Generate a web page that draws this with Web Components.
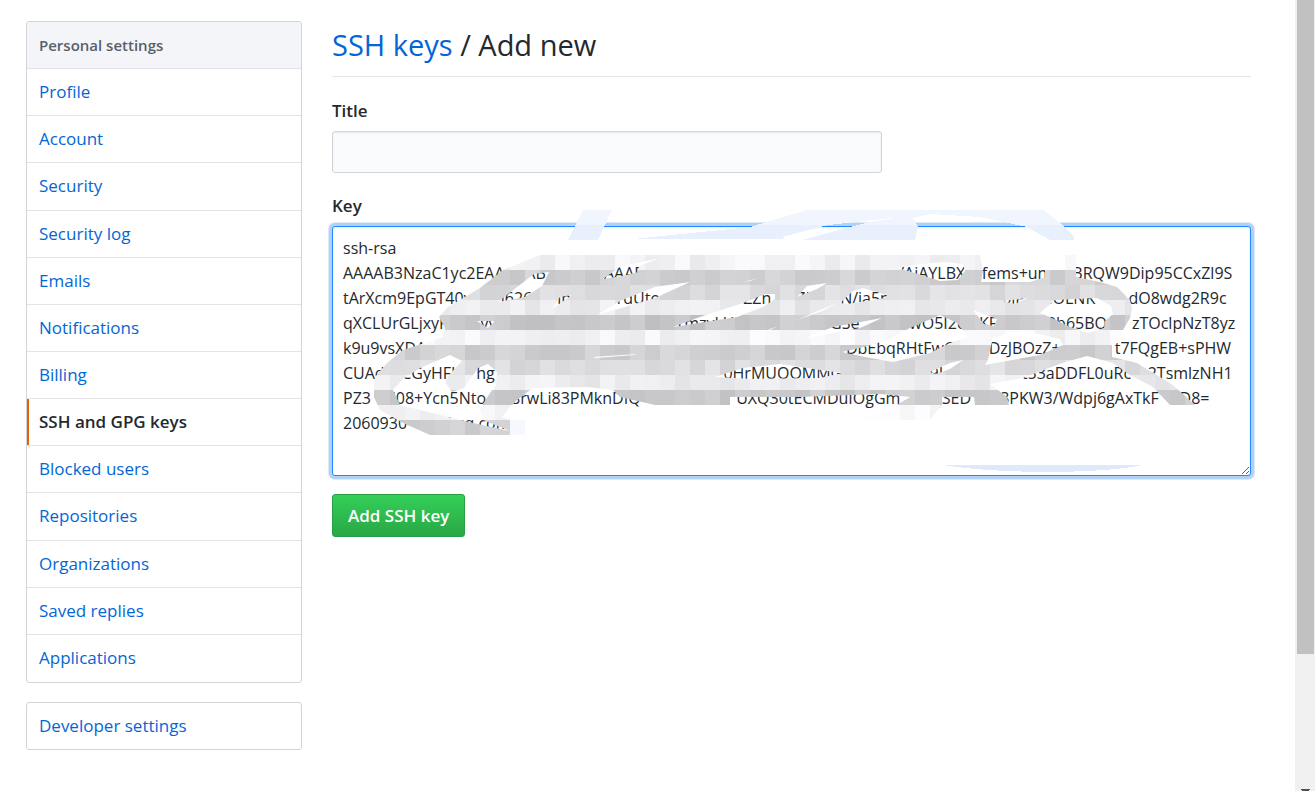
<!DOCTYPE html>
<html lang="en">
<head>
<meta charset="utf-8">
<title>Add new SSH key</title>
<style>
html,body{margin:0;min-height:100%}
body{background:#fff;color:#24292e;font:17px/25px "Open Sans","Noto Sans",sans-serif}
</style>
</head>
<body>
<settings-page>
  <settings-menu slot="side" heading="Personal settings">
    <menu-item>Profile</menu-item>
    <menu-item>Account</menu-item>
    <menu-item>Security</menu-item>
    <menu-item>Security log</menu-item>
    <menu-item>Emails</menu-item>
    <menu-item>Notifications</menu-item>
    <menu-item>Billing</menu-item>
    <menu-item current>SSH and GPG keys</menu-item>
    <menu-item>Blocked users</menu-item>
    <menu-item>Repositories</menu-item>
    <menu-item>Organizations</menu-item>
    <menu-item>Saved replies</menu-item>
    <menu-item>Applications</menu-item>
  </settings-menu>
  <settings-menu slot="side"><menu-item>Developer settings</menu-item></settings-menu>
  <key-form></key-form>
</settings-page>
<script>
class Base extends HTMLElement{
  constructor(){super();this.attachShadow({mode:'open'}).innerHTML=this.render();}
}
customElements.define('settings-page',class extends Base{
  render(){return `<style>
  :host{display:grid;grid-template-columns:minmax(0,1fr) 20px;min-height:100vh}
  .content{display:flex;gap:30px;align-items:flex-start;padding:21px 44px 21px 26px}
  aside{flex:0 0 276px;display:grid;gap:19px}
  main{flex:1;min-width:0}
  </style>
  <div class="content"><aside><slot name="side"></slot></aside><main><slot></slot></main></div>
  <page-scrollbar></page-scrollbar>`}
});
customElements.define('page-scrollbar',class extends Base{
  render(){return `<style>
  :host{display:flex;flex-direction:column;justify-content:space-between;height:100vh;overflow:hidden;background:#f0f0f0}
  div{height:654px;max-height:84%;margin:0 1px 0 2px;background:#c1c1c1}
  svg{display:block;align-self:center;width:9px;height:2px}
  </style><div></div><svg viewBox="0 0 9 2"><path d="M0 0h9v1H8v1H1V1H0z" fill="#505050"/></svg>`}
});
customElements.define('settings-menu',class extends HTMLElement{
  connectedCallback(){
    if(this.shadowRoot)return;
    const h=this.getAttribute('heading');
    this.attachShadow({mode:'open'}).innerHTML=`<style>
    :host{display:block}
    nav{display:grid;grid-auto-rows:1fr;border:1px solid #d1d5da;border-radius:3px;overflow:hidden;min-height:46px}
    nav.long{min-height:660px}
    h3{margin:0;padding:10px 12px;background:#f3f5f9;color:#586069;font-size:15px;line-height:26px;font-weight:600;border-bottom:1px solid #e1e4e8}
    </style><nav class="${h?'long':''}">${h?`<h3>${h}</h3>`:''}<slot></slot></nav>`;
  }
});
customElements.define('menu-item',class extends Base{
  render(){return `<style>
  :host{display:flex;border-bottom:1px solid #e1e4e8}
  :host(:last-child){border-bottom:0}
  a{flex:1;padding:10px 12px;line-height:26px;color:#0366d6;text-decoration:none}
  :host([current]) a{padding-left:10px;border-left:2px solid #e36209;color:#24292e;font-weight:600}
  </style><a href="#"><slot></slot></a>`}
});
customElements.define('key-form',class extends Base{
  render(){return `<style>
  :host{display:block}
  h2{margin:0 0 21px;padding-bottom:8px;border-bottom:1px solid #e1e4e8;font-size:29px;line-height:47px;font-weight:400}
  h2 a{color:#0366d6;text-decoration:none}
  label{display:block;font-weight:600;line-height:25px;margin-bottom:8px}
  input,textarea,button{box-sizing:border-box;font:inherit;color:inherit;display:block;margin:0}
  input{width:550px;max-width:100%;height:42px;padding:6px 10px;border:1px solid #d1d5da;border-radius:3px;background:#fafbfc;box-shadow:inset 0 1px 2px rgba(27,31,35,.075);margin-bottom:20px}
  .key{position:relative;margin-bottom:18px}
  textarea{width:100%;height:250px;padding:9px 10px;border:1px solid #2188ff;border-radius:3px;outline:0;box-shadow:inset 0 1px 2px rgba(27,31,35,.075),0 0 0 3px #b1d1f7,0 0 0 4px #dce9f8;font-size:16px;white-space:pre;overflow:hidden;resize:vertical}
  redaction-marks{position:absolute;left:0;top:-16px;pointer-events:none}
  button{height:43px;padding:0 15px;border:1px solid #28a043;border-radius:3px;background:linear-gradient(#34d058,#28a745);color:#fff;font-weight:600}
  </style>
  <h2><a href="#">SSH keys</a> / Add new</h2>
  <form>
  <label for="title">Title</label><input id="title" type="text">
  <label for="key">Key</label>
  <div class="key"><textarea id="key" spellcheck="false">
ssh-rsa
AAAAB3NzaC1yc2EAA     AB              AAAB                                                             /AiAYLBX    fems+un      BRQW9Dip95CCxZl9S
tArXcm9EpGT40v       i626      in           rdUto                    ZZn      ZK      N/ia5n                           0jF      lOLNK        dO8wdg2R9c
qXCLUrGLjxyF        vy                                           TmzyLU                       GSe            wO5I2o   KF            9b65BO      zTOclpNzT8yz
k9u9vsXDA                                                                                                     DbEbqRHtFwG        DzJBOzZ+             t7FQgEB+sPHW
CUAd    CGyHFI     hg                                                       0HrMUQOMMG                     9L                  t53aDDFL0uRc    2TsmlzNH1
PZ3     l08+Ycn5Nto      8rwLi83PMknDIQ                       UXQ30tECMDuIOgGm         jSED       3PKW3/Wdpj6gAxTkF     D8=
2060930        @qq.com</textarea><redaction-marks></redaction-marks></div>
  <button type="button">Add SSH key</button>
  </form>`}
});
customElements.define('redaction-marks',class extends Base{
  render(){
    // Mosaic of 15px cells: one base grey for each row, varied from cell to cell.
    const rows=[242,208,220,234,200,244,208,220,236,202,243,208];
    let seed=7,cells='';
    rows.forEach((v,r)=>{
      for(let x=360;x<1200;x+=15){
        seed=(seed*1103515245+12345)%2147483648;
        const base=r===10&&x>600?252:v;
        const d=Math.floor(seed/65536)%19-9,g=Math.min(253,base+d);
        cells+=`<rect x="${x}" y="${255+r*15}" width="15" height="15" fill="rgb(${g},${g},${g+2})"/>`;
      }
    });
    const outer='M374 397L375 377 387 363 403 350 443 337 445 328 439 317 448 307 480 288 503 270 540 255H980L983 270 981 282H1030L1045 277V270H1065V255H1076V277L1100 282 1117 287 1130 300 1132 309 1130 318 1123 330 1112 343V357L1137 363 1173 385 1195 405H1170L1153 387 1130 375 1113 363 1087 356 1062 363 1023 378 990 384 1007 397 1009 405 H975L974 397 942 397 942 405 930 420 855 420 885 412 910 397 880 394 800 397H730V405H655L620 397 613 390 587 387 533 388 517 400 510 407 502 417 510 420H525V435H430L403 423 380 410Z';
    const holes=[
     'M393 390L403 379 420 368 450 355 462 361 449 375 445 382 452 392 464 388 478 368 488 364 497 372 496 385 490 393 485 401 480 409 483 420 510 431 473 423 440 415 400 405Z',
     'M498 302L512 291 534 274 549 272 542 286 525 297Z',
     'M552 309L560 297 572 295Z',
     'M597 315L620 301 655 287 690 282 655 298 625 307Z',
     'M603 279L620 267 660 258 639 266 638 272 622 276Z',
     'M477 321L495 321 488 328Z','M593 357L637 354 634 355 596 358Z',
     'M673 327L700 317 743 303 765 294 775 294 775 299 763 307 737 317Z',
     'M797 297L807 286 827 283 817 289Z',
     'M840 303L853 291 863 288 887 295 885 298 847 304Z',
     'M744 282L758 278 750 281Z','M755 335L778 326 770 330Z',
     'M797 320L820 310 838 303 822 311Z',
     'M805 338L833 327 882 318 860 328Z',
     'M842 352L868 346 890 339 910 328 940 315 957 323 968 337 950 343 930 353 893 362 865 357Z',
     'M715 377L743 368 780 364 820 370 842 373 820 378 753 379Z',
     'M897 268L920 264 945 262 963 264 965 271 958 280 940 281 915 273Z',
     'M1003 301L1028 298 1015 304Z','M1040 313L1055 300 1097 298 1111 306 1113 314 1105 321 1104 328 1088 333 1070 327 1052 318Z',
     'M973 310L997 319 994 326 984 324Z',
     'M988 360L990 350 993 338 1022 330 1060 339 1063 345 1040 355 985 365Z',
     'M930 372L950 363 963 360 950 369 936 374Z'
    ];
    const cover=outer+holes.join('');
    const top='M568 240L583 210H612L598 240ZM633 239L750 227 807 210H1043L1063 225 1074 237V240H1050L1027 227 980 217 930 214 913 218 918 227 915 240H802L850 227 870 222 900 217 828 225 782 237 785 239Z';
    return `<style>:host{display:block}svg{display:block;width:920px;height:268px}</style>
    <svg viewBox="332 210 920 268" aria-hidden="true" shape-rendering="crispEdges">
    <defs><clipPath id="c"><path clip-rule="evenodd" d="${cover}"/></clipPath><clipPath id="u"><path d="M332 210H1252V225H332Z"/></clipPath></defs>
    <path d="${top}" fill="#e8f0fd"/><path d="${top}" fill="#f1f6fe" clip-path="url(#u)"/>
    <path d="M943 465H1143Q1110 472 1040 472 980 471 943 465Z" fill="#deeafb"/>
    <g clip-path="url(#c)">${cells}</g><rect x="510" y="420" width="15" height="15" fill="#f5f9fe"/></svg>`;
  }
});
</script>
</body>
</html>
